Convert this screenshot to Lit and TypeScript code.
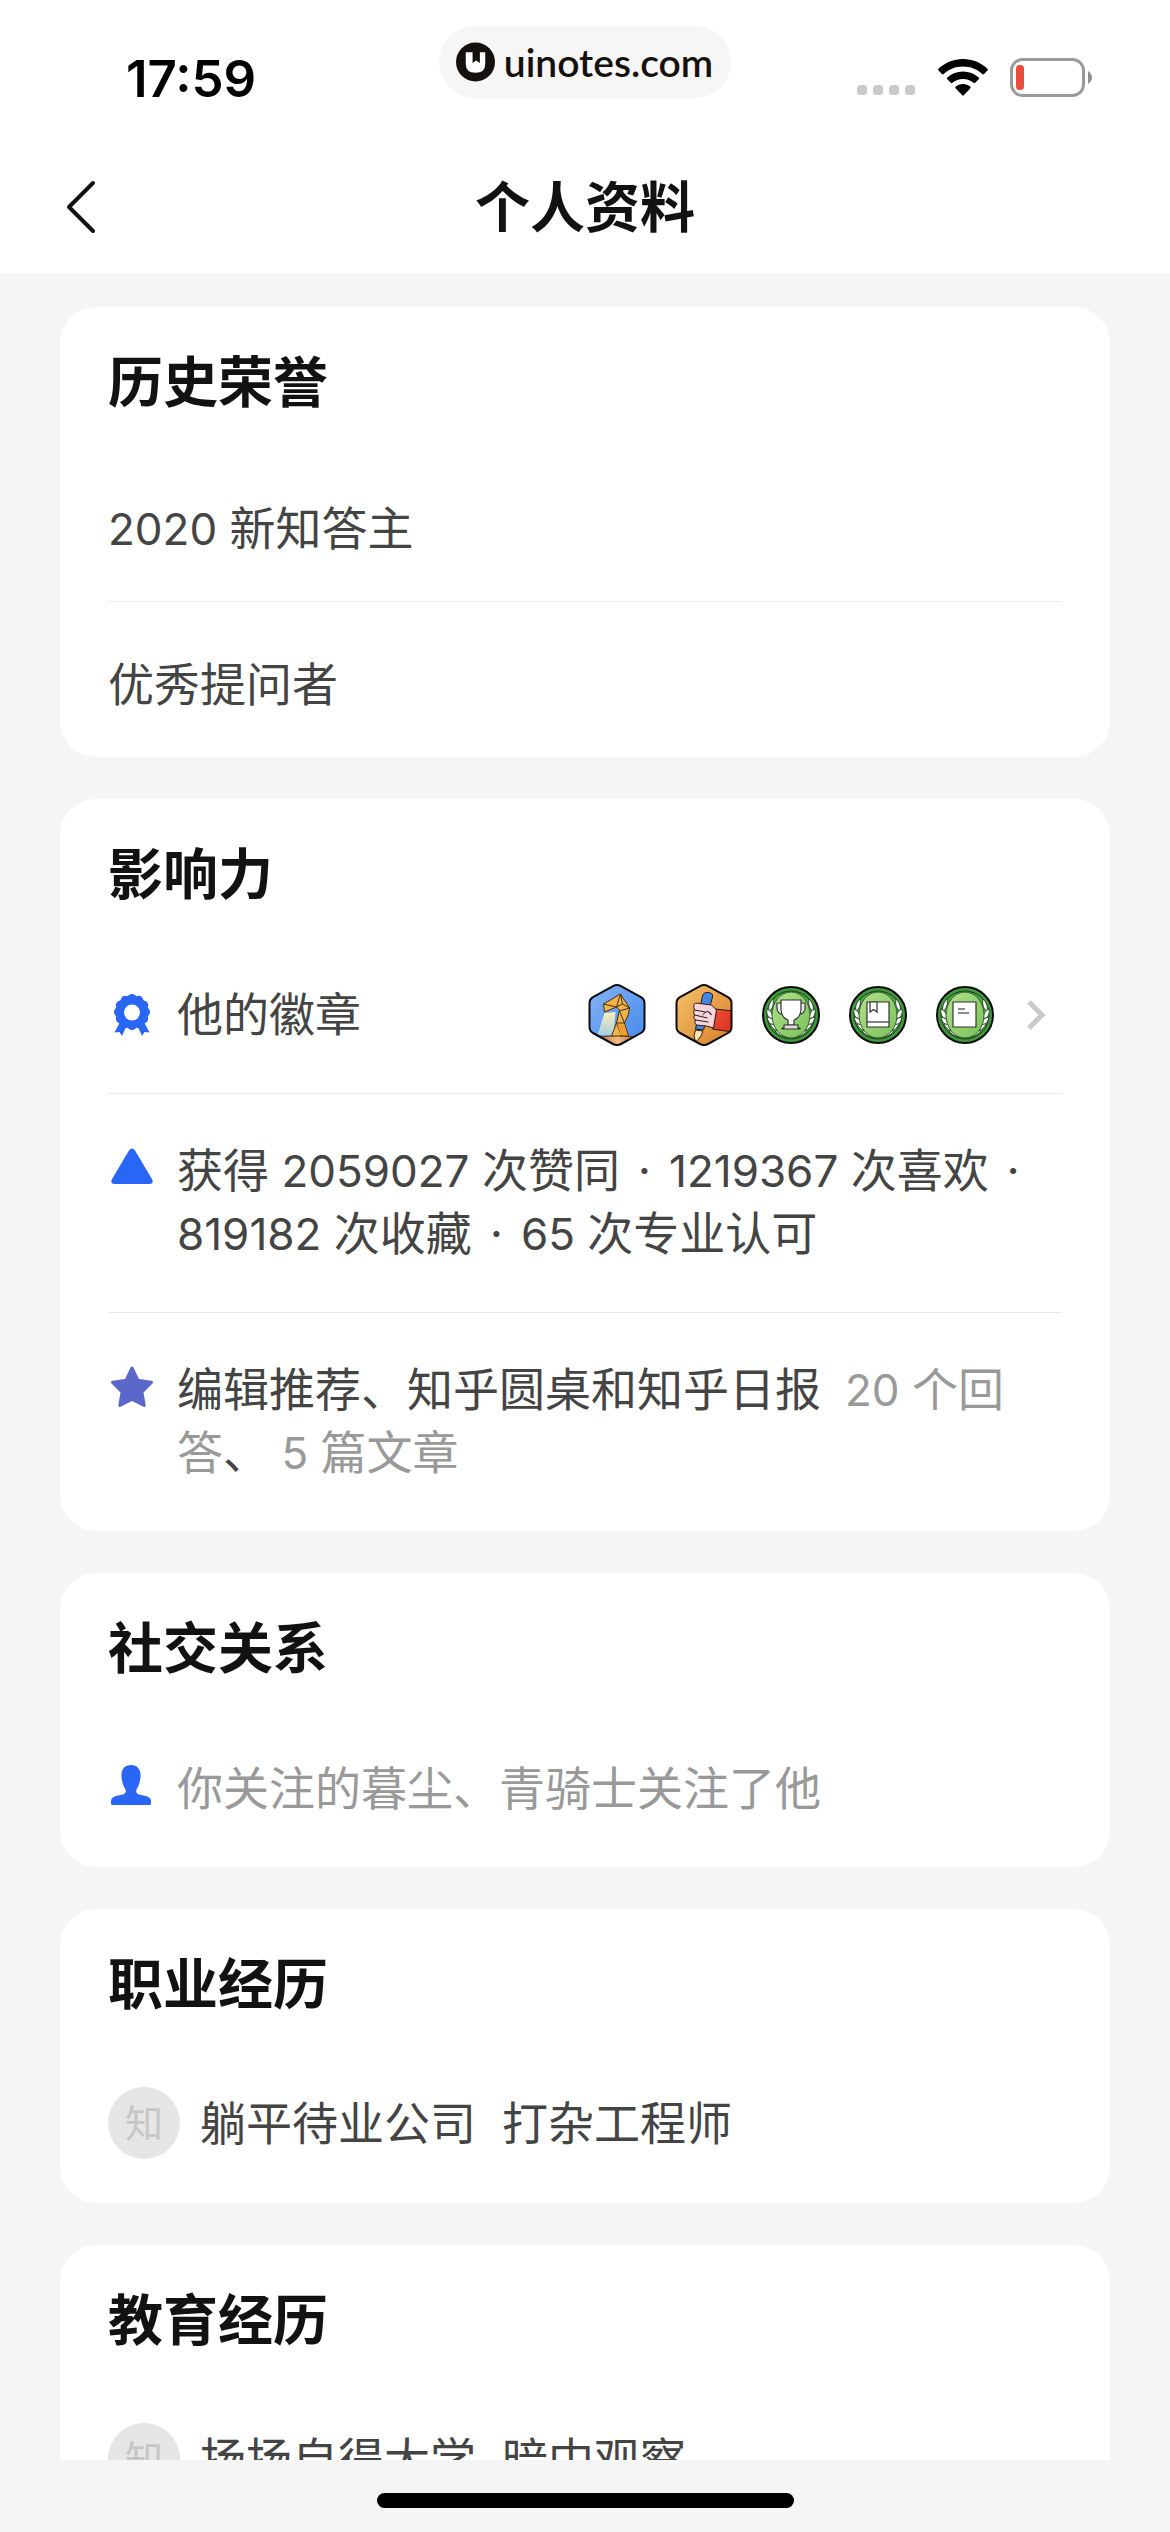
import { LitElement, html, svg, css } from "lit";
import { customElement, property } from "lit/decorators.js";

const BASE = css`
  * { box-sizing: border-box; }
  h1, h2, p, ul { margin: 0; padding: 0; }
  ul { list-style: none; }
  svg { display: block; flex: none; }
`;

const laurel = svg`
  <circle cx="29" cy="29" r="28" fill="#3f9a3c" stroke="#0c0c0c" stroke-width="2"/>
  <circle cx="29" cy="29" r="24" fill="#4da648" stroke="#1c3a1a" stroke-width="1"/>
  <g fill="#fff" stroke="#2b4a28" stroke-width="1">
    <path d="M11 13C7 17 6 21 7 25C11 23 12 17 11 13Z"/>
    <path d="M5 23C4 28 6 32 11 33C11 28 9 25 5 23Z"/>
    <path d="M5 31C6 37 10 40 14 39C13 35 10 32 5 31Z"/>
    <path d="M8 38C10 43 15 46 19 44C17 40 13 38 8 38Z"/>
    <path d="M13 45C17 50 23 52 28 51C25 46 19 44 13 45Z"/>
    <path d="M47 13C51 17 52 21 51 25C47 23 46 17 47 13Z"/>
    <path d="M53 23C54 28 52 32 47 33C47 28 49 25 53 23Z"/>
    <path d="M53 31C52 37 48 40 44 39C45 35 48 32 53 31Z"/>
    <path d="M50 38C48 43 43 46 39 44C41 40 45 38 50 38Z"/>
    <path d="M45 45C41 50 35 52 30 51C33 46 39 44 45 45Z"/>
  </g>
  <ellipse cx="29" cy="29" rx="19" ry="23" fill="url(#leaf)" stroke="#2f5a2a" stroke-width="1"/>
`;
const leafGradient = svg`
  <defs><linearGradient id="leaf" x1="0" y1="0" x2="1" y2="1">
    <stop offset="0" stop-color="#b4e08d"/><stop offset="1" stop-color="#78c257"/>
  </linearGradient></defs>
`;
const round = (inner: unknown) => html`
  <svg width="58" height="62" viewBox="0 -2 58 62" aria-hidden="true">${leafGradient}${laurel}${inner}</svg>
`;
const HEX = "M24.5 2.2Q28.5 0 32.5 2.2L52.5 13.2Q56 15.2 56 19.2V43Q56 47 52.5 49L32.5 60Q28.5 62 24.5 60L4.5 49Q1 47 1 43V19.2Q1 15.2 4.5 13.2Z";

const badges = [
  html`<svg width="58" height="62" viewBox="0 0 57 62" aria-hidden="true">
    <defs>
      <linearGradient id="sky" x1="0" y1="0" x2="1" y2="1"><stop offset="0" stop-color="#85b4f7"/><stop offset="1" stop-color="#4587ea"/></linearGradient>
      <linearGradient id="beam" x1="0" y1="0" x2="0" y2="1"><stop offset="0" stop-color="#fbf0b8"/><stop offset="1" stop-color="#a8cfdf"/></linearGradient>
      <linearGradient id="base" x1="0" y1="0" x2="1" y2="0"><stop offset="0" stop-color="#c07a3c"/><stop offset=".5" stop-color="#f0bc86"/><stop offset="1" stop-color="#c07a3c"/></linearGradient>
      <clipPath id="hex"><path d=${HEX}/></clipPath>
    </defs>
    <path d=${HEX} fill="url(#sky)"/>
    <g clip-path="url(#hex)">
      <path d="M16 29L9 51H25L27 28Z" fill="url(#beam)"/>
      <path d="M12 53Q29 50 46 53L40 62H16Z" fill="url(#base)" stroke="#5c3413"/>
      <g fill="#f1b448" stroke="#4a2f10" stroke-linejoin="round">
        <path d="M15 20L32 10L41 24L40 30L36 39L40 52H23L28 39L31 26L28 23L16 28Z"/>
        <path fill="none" d="M15 20L28 23L32 10L34 20L41 24L31 27M34 20L28 23M31 27L36 39H28M28 39L33 52"/>
      </g>
      <path d="M29 40H35L39 51H32Z" fill="#f09c34"/>
    </g>
    <path d=${HEX} fill="none" stroke="#0d0d0d" stroke-width="2"/>
  </svg>`,
  html`<svg width="58" height="62" viewBox="0 0 57 62" aria-hidden="true">
    <defs>
      <linearGradient id="amber" x1="0" y1="0" x2="1" y2="1"><stop offset="0" stop-color="#f4c36b"/><stop offset="1" stop-color="#d97e29"/></linearGradient>
      <linearGradient id="cuff" x1="0" y1="0" x2="1" y2="1"><stop offset="0" stop-color="#f0503a"/><stop offset="1" stop-color="#d9301f"/></linearGradient>
      <clipPath id="hex2"><path d=${HEX}/></clipPath>
    </defs>
    <path d=${HEX} fill="url(#amber)"/>
    <g clip-path="url(#hex2)" stroke="#2a1a12" stroke-linejoin="round">
      <path d="M27 12Q28 8 32 8.500L35 9Q38 10 37 13L28 46L20 45Z" fill="#3f86e8"/>
      <path d="M20 46L27 47Q27 52 20 58Q17 51 20 46Z" fill="#fbe6b0"/>
      <path d="M40 25L57 27V48L37 45Z" fill="url(#cuff)"/>
      <path d="M20 19L36 21L41 26L38 44L31 42L21 41Q18 39 20 36Q17 34 19 31Q17 28 19 26Q17 21 20 19Z" fill="#f6d5dc"/>
      <path d="M19 26L30 28M19 31L32 34M20 36L33 38M27 31Q33 24 36 31L33 28" fill="none"/>
    </g>
    <path d=${HEX} fill="none" stroke="#0d0d0d" stroke-width="2"/>
  </svg>`,
  round(svg`<g fill="#fff" stroke="#333" stroke-width="1.2" stroke-linejoin="round">
    <path d="M19 17H15V23Q16 29 22 28M39 17H43V23Q42 29 36 28" fill="#e9e9e9"/>
    <path d="M19 14H39V24Q38 32 32 34V39H26V34Q20 32 19 24Z"/>
    <path d="M22 39H36V42H38V43H20V42H22Z" fill="#ddd"/></g>`),
  round(svg`<g fill="#fff" stroke="#333" stroke-width="1.2">
    <path d="M18 16H40V41H18Z"/><path d="M18 36H40"/><path d="M21 16H28V26L24.500 23.500L21 26Z"/></g>`),
  round(svg`<g fill="#fff" stroke="#333" stroke-width="1.2">
    <path d="M17 16H40V41H17Z"/><path d="M22 23H29M22 27H33" stroke-width="1.6" stroke="#666"/></g>`),
];

const scallops = Array.from({ length: 12 }, (_, i) => {
  const angle = (i * Math.PI) / 6;
  return svg`<circle cx=${21 + 13.5 * Math.sin(angle)} cy=${18 - 13.5 * Math.cos(angle)} r="4.5"/>`;
});

const icons = {
  ribbon: html`<svg width="42" height="42" viewBox="0 0 42 42" fill="#2a66f5" aria-hidden="true">
    <circle cx="21" cy="18" r="16.5"/>${scallops}
    <path d="M9 28L3.500 38.500L8.500 38L11 42L15 33ZM33 28L38.500 38.500L33.500 38L31 42L27 33Z"/>
    <circle cx="21" cy="18.500" r="8" fill="#fff"/></svg>`,
  triangle: html`<svg width="42" height="42" viewBox="0 0 42 42" aria-hidden="true">
    <path d="M17.800 3.800Q21 -.8 24.200 3.800L41.200 32.500Q43 36.800 38.500 37H3.500Q-1 36.800 .8 32.500Z" fill="#2a66f5"/></svg>`,
  star: html`<svg width="42" height="42" viewBox="0 0 42 42" aria-hidden="true">
    <path d="M19.500 1.500Q21-.5 22.500 1.500L28 13L40.500 14.800Q43 15.500 41.500 17.500L32.500 26.500L34.700 39Q34.800 41.500 32.500 40.800L21 35L9.500 40.800Q7.200 41.500 7.300 39L9.500 26.500L.5 17.500Q-1 15.500 1.500 14.800L14 13Z" fill="#5b67c9"/></svg>`,
  person: html`<svg width="40" height="42" viewBox="0 0 40 42" aria-hidden="true">
    <path d="M20 0C26.500 0 30 4.500 29.500 11.500C29.200 18 27 22 25.500 24.500C24.500 27.500 26 29 29 29.800L35 31Q40 32.500 40 36V38.500Q40 40 38.500 40H1.500Q0 40 0 38.500V36Q0 32.500 5 31L11 29.800C14 29 15.500 27.500 14.500 24.500C13 22 10.800 18 10.500 11.500C10 4.500 13.500 0 20 0Z" fill="#2a66f5"/></svg>`,
};

@customElement("status-bar")
class StatusBar extends LitElement {
  static styles = [BASE, css`
    :host { display: grid; grid-template-columns: 1fr auto 1fr; align-items: start; height: 136px; padding: 26px 78px 0; background: #fff; }
    .time { font: 600 51px/62px Inter, "Liberation Sans", sans-serif; padding: 22px 0 0 48px; color: #000; }
    .pill { display: flex; align-items: center; gap: 9px; height: 72px; padding: 0 18px 0 17px; border-radius: 36px; background: #f6f6f6; color: #15110f; font: 600 39px/70px Lato, sans-serif; text-decoration: none; }
    .signals { display: flex; justify-content: flex-end; align-items: flex-end; gap: 22px; padding-top: 32px; }
  `];
  render() {
    return html`
      <time class="time">17:59</time>
      <a class="pill" href="#">
        <svg width="39" height="40" viewBox="0 0 40 40" aria-hidden="true">
          <circle cx="20" cy="20" r="20" fill="#15110f"/>
          <path d="M10 10H17V21L20.700 18.500L24.500 21V10H30V22Q30 31 20 31Q10 31 10 22Z" fill="#fff"/>
        </svg>
        <span>uinotes.com</span>
      </a>
      <div class="signals">
        <svg width="59" height="12" viewBox="0 0 59 12" aria-hidden="true" fill="#c9c9c9">
          <rect width="10" height="10" rx="3.500"/><rect x="16" width="10" height="10" rx="3.500"/><rect x="32" width="10" height="10" rx="3.500"/><rect x="48" width="10" height="10" rx="3.500"/>
        </svg>
        <svg width="50" height="38" viewBox="0 0 50 38" aria-hidden="true">
          <path d="M25 0C34.500 0 43 3.700 49.500 9.700Q50.300 10.600 49.500 11.500L46 15Q45.200 15.800 44.300 15C39 10.200 32.500 7.500 25 7.500S11 10.200 5.700 15Q4.800 15.800 4 15L.5 11.500Q-.3 10.600 .5 9.700C7 3.700 15.500 0 25 0ZM25 12.500C31 12.500 36.500 14.800 40.700 18.500Q41.600 19.400 40.700 20.300L37.200 23.800Q36.400 24.600 35.500 23.800C32.700 21.400 29 20 25 20S17.300 21.400 14.500 23.800Q13.600 24.600 12.800 23.800L9.300 20.300Q8.400 19.400 9.300 18.500C13.500 14.800 19 12.500 25 12.500ZM25 25C27.900 25 30.300 26 32.200 27.600Q33.100 28.500 32.200 29.400L26 36Q25 37 24 36L17.800 29.400Q16.900 28.500 17.800 27.600C19.700 26 22.100 25 25 25Z"/>
        </svg>
        <svg width="82" height="39" viewBox="0 0 82 39" aria-hidden="true">
          <rect x="1.500" y="1.500" width="72" height="36" rx="11" fill="none" stroke="#9a9a9a" stroke-width="3"/>
          <rect x="6" y="7" width="8" height="25" rx="3.500" fill="#e94d3c"/>
          <path d="M78 13Q82 16 82 19.500T78 26Z" fill="#8f8f8f"/>
        </svg>
      </div>`;
  }
}

@customElement("nav-bar")
class NavBar extends LitElement {
  static styles = [BASE, css`
    :host { display: grid; grid-template-columns: 1fr auto 1fr; align-items: center; height: 137px; padding: 4px 48px 0; background: #fff; }
    .back { justify-self: start; display: flex; padding: 12px 16px; border: 0; background: none; }
    .title { font: 700 55px/76px Inter, "Noto Sans CJK SC", sans-serif; color: #121212; }
  `];
  render() {
    return html`
      <button class="back" aria-label="返回">
        <svg width="36" height="54" viewBox="0 0 36 54" fill="none" stroke="#121212" stroke-width="4" stroke-linecap="round" stroke-linejoin="round"><path d="M29 3L5 27L29 51"/></svg>
      </button>
      <h1 class="title">个人资料</h1>`;
  }
}

@customElement("info-card")
class InfoCard extends LitElement {
  @property() heading = "";
  static styles = [BASE, css`
    :host { display: block; background: #fff; border-radius: 36px; padding: 0 48px; }
    .heading { font: 700 55px/76px Inter, "Noto Sans CJK SC", sans-serif; color: #121212; padding: 37px 0 26px; }
  `];
  render() {
    return html`<section><h2 class="heading">${this.heading}</h2><slot></slot></section>`;
  }
}

@customElement("app-root")
class AppRoot extends LitElement {
  static styles = [BASE, css`
    :host { display: flex; flex-direction: column; height: 100vh; overflow: hidden; background: #f5f5f5; color: #444; font: 400 46px/63px Inter, "Noto Sans CJK SC", sans-serif; }
    .list { flex: 1; min-height: 0; overflow: hidden; display: flex; flex-direction: column; gap: 42px; padding: 34px 60px 0; }
    .list > * { flex: none; }
    .row { display: flex; padding: 45px 0 47px; }
    .item + .item { border-top: 1px solid #ebebeb; }
    .plain { padding: 51px 0 41px; }
    .icon { display: flex; flex: none; width: 69px; padding: 8px 3px 0; }
    .text { flex: 1; }
    .num { font-size: 44px; line-height: 1; }
    .dot { margin: 0 5px; }
    .muted { color: #999; }
    .more { margin-left: 11px; }
    .link { color: inherit; text-decoration: none; align-items: center; }
    .link .icon { padding-top: 0; }
    .badges { display: flex; gap: 29px; align-items: center; margin-right: 32px; }
    .chevron { margin-right: 16px; }
    .org { align-items: center; gap: 20px; padding: 39px 0 44px; }
    .logo { display: grid; place-items: center; flex: none; width: 72px; height: 72px; border-radius: 50%; background: #e6e6e6; color: #c6c6c6; font-size: 38px; line-height: 72px; }
    .space { margin-left: 26px; }
    .home { flex: none; display: flex; justify-content: center; height: 72px; padding-top: 33px; }
    .bar { width: 417px; height: 15px; border-radius: 8px; background: #000; }
  `];
  render() {
    const dot = html`<span class="dot">·</span>`;
    return html`
      <status-bar></status-bar>
      <nav-bar></nav-bar>
      <main class="list">
        <info-card heading="历史荣誉">
          <ul>
            <li class="item row plain"><span><span class="num">2020 </span>新知答主</span></li>
            <li class="item row plain">优秀提问者</li>
          </ul>
        </info-card>
        <info-card heading="影响力">
          <ul>
            <li class="item">
              <a class="row link" href="#">
                <span class="icon">${icons.ribbon}</span>
                <span class="text">他的徽章</span>
                <span class="badges">${badges}</span>
                <svg class="chevron" width="20" height="32" viewBox="0 0 20 32" fill="none" stroke="#c9c9cd" stroke-width="5" aria-hidden="true"><path d="M3 3L16 16L3 29"/></svg>
              </a>
            </li>
            <li class="item row">
              <span class="icon">${icons.triangle}</span>
              <p class="text">获得<span class="num"> 2059027 </span>次赞同 ${dot} <span class="num">1219367 </span>次喜欢 ${dot} <span class="num">819182 </span>次收藏 ${dot} <span class="num">65 </span>次专业认可</p>
            </li>
            <li class="item row">
              <span class="icon">${icons.star}</span>
              <p class="text">编辑推荐、知乎圆桌和知乎日报 <span class="muted more"><span class="num">20 </span>个回答</span>、<span class="muted"><span class="num"> 5 </span>篇文章</span></p>
            </li>
          </ul>
        </info-card>
        <info-card heading="社交关系">
          <div class="row">
            <span class="icon">${icons.person}</span>
            <p class="text muted">你关注的暮尘、青骑士关注了他</p>
          </div>
        </info-card>
        <info-card heading="职业经历">
          <div class="row org"><span class="logo">知</span><p class="text">躺平待业公司<span class="space">打杂工程师</span></p></div>
        </info-card>
        <info-card heading="教育经历">
          <div class="row org"><span class="logo">知</span><p class="text">扬扬自得大学<span class="space">暗中观察</span></p></div>
        </info-card>
      </main>
      <footer class="home"><div class="bar"></div></footer>`;
  }
}
